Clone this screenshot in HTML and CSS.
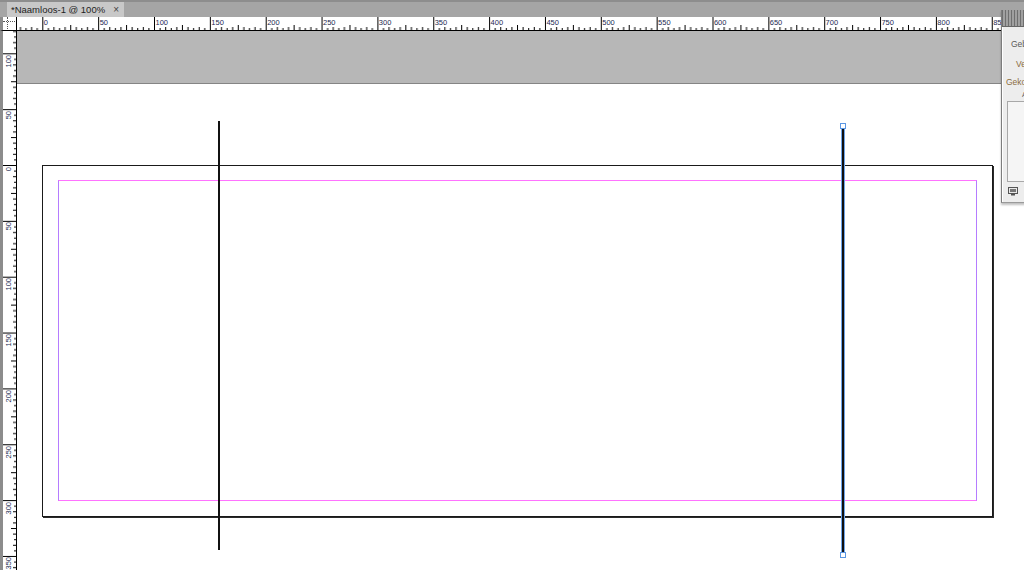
FILE: index.html
```html
<!DOCTYPE html>
<html lang="nl">
<head>
  <meta charset="UTF-8">
  <title>Naamloos-1 @ 100%</title>
  <link rel="stylesheet" href="styles.css">
</head>
<body>

  <!-- documenttabs -->
  <div class="tabbar">
    <div class="tab">
      <span class="tab-title">*Naamloos-1 @ 100%</span>
      <span class="tab-close">×</span>
    </div>
  </div>

  <!-- linialen + werkruimte -->
  <div class="workspace">
    <div class="ruler-corner"></div>

    <div class="ruler ruler-h">
      <svg class="ticks" width="100%" height="13">
        <defs>
          <pattern id="ticks-h" patternUnits="userSpaceOnUse" x="25.3" y="0" width="55.85" height="13">
            <rect x="0" y="0" width="1" height="13"/>
            <rect x="5.585" y="11" width="1" height="2"/>
            <rect x="11.17" y="10" width="1" height="3"/>
            <rect x="16.755" y="11" width="1" height="2"/>
            <rect x="22.34" y="10" width="1" height="3"/>
            <rect x="27.925" y="8" width="1" height="5"/>
            <rect x="33.51" y="10" width="1" height="3"/>
            <rect x="39.095" y="11" width="1" height="2"/>
            <rect x="44.68" y="10" width="1" height="3"/>
            <rect x="50.265" y="11" width="1" height="2"/>
          </pattern>
        </defs>
        <rect width="100%" height="13" fill="url(#ticks-h)" shape-rendering="crispEdges"/>
      </svg>
      <div class="labels-h">
        <span>0</span><span>50</span><span>100</span><span>150</span><span>200</span><span>250</span>
        <span>300</span><span>350</span><span>400</span><span>450</span><span>500</span><span>550</span>
        <span>600</span><span>650</span><span>700</span><span>750</span><span>800</span><span>850</span>
      </div>
    </div>

    <div class="ruler ruler-v">
      <svg class="ticks" width="13" height="100%">
        <defs>
          <pattern id="ticks-v" patternUnits="userSpaceOnUse" x="0" y="134" width="13" height="55.85">
            <rect x="0" y="0" width="13" height="1"/>
            <rect x="11" y="5.585" width="2" height="1"/>
            <rect x="10" y="11.17" width="3" height="1"/>
            <rect x="11" y="16.755" width="2" height="1"/>
            <rect x="10" y="22.34" width="3" height="1"/>
            <rect x="8" y="27.925" width="5" height="1"/>
            <rect x="10" y="33.51" width="3" height="1"/>
            <rect x="11" y="39.095" width="2" height="1"/>
            <rect x="10" y="44.68" width="3" height="1"/>
            <rect x="11" y="50.265" width="2" height="1"/>
          </pattern>
        </defs>
        <rect width="13" height="100%" fill="url(#ticks-v)" shape-rendering="crispEdges"/>
      </svg>
      <div class="labels-v">
        <div><span>100</span></div><div><span>50</span></div><div><span>0</span></div>
        <div><span>50</span></div><div><span>100</span></div><div><span>150</span></div>
        <div><span>200</span></div><div><span>250</span></div><div><span>300</span></div>
        <div><span>350</span></div>
      </div>
    </div>

    <div class="canvas">
      <div class="pasteboard"></div>

      <!-- pagina met marges -->
      <div class="page">
        <div class="margins"></div>
      </div>

      <!-- lijnen -->
      <div class="line line-a"></div>
      <div class="line line-b selected">
        <span class="handle handle-top"></span>
        <span class="handle handle-bottom"></span>
      </div>
    </div>
  </div>

  <!-- zwevend paneel -->
  <div class="panel">
    <div class="panel-grip"></div>
    <div class="panel-body">
      <div class="panel-label label-geb">Geb</div>
      <div class="panel-label label-ve">Ve</div>
      <div class="panel-label label-geko">Geko</div>
      <div class="panel-mark">A</div>
      <div class="panel-list"></div>
      <div class="panel-foot">
        <svg class="panel-icon" width="10" height="9" viewBox="0 0 10 9">
          <rect x="0.5" y="0.5" width="9" height="6" fill="#e8e8e8" stroke="#555"/>
          <rect x="2" y="2" width="6" height="3" fill="#777"/>
          <rect x="3" y="7" width="4" height="1.5" fill="#555"/>
        </svg>
      </div>
    </div>
  </div>

</body>
</html>
```

FILE: styles.css
```css
* {
  margin: 0;
  padding: 0;
  box-sizing: border-box;
}

html, body {
  width: 1024px;
  height: 570px;
  overflow: hidden;
}

body {
  font-family: 'Liberation Sans', Arial, sans-serif;
  background: #ffffff;
  position: relative;
}

/* tabs */
.tabbar {
  height: 17px;
  background: #a5a5a5;
  border-top: 2px solid #8d8d8d;
  padding-left: 7px;
  display: flex;
  align-items: flex-end;
}

.tab {
  width: 117px;
  height: 15px;
  background: #c8c8c8;
  display: flex;
  align-items: center;
  padding-left: 4px;
  font-size: 9.5px;
  color: #1e1e1e;
}

.tab-title {
  flex: none;
}

.tab-close {
  margin-left: 8px;
  font-size: 10px;
  color: #444;
}

/* linialen */
.workspace {
  display: grid;
  grid-template-columns: 17px 1fr;
  grid-template-rows: 14px 1fr;
  height: 553px;
}

.ruler-corner {
  background: #fff;
  border-left: 3px solid #8c8c8c;
  border-right: 1px solid #000;
  border-bottom: 1px solid #000;
  position: relative;
}

.ruler-corner::before {
  content: "";
  position: absolute;
  left: 4px;
  top: 0;
  height: 12px;
  border-left: 1px dotted #555;
}

.ruler-corner::after {
  content: "";
  position: absolute;
  left: 0;
  top: 4px;
  width: 12px;
  border-top: 1px dotted #555;
}

.ruler {
  background: #fff;
  position: relative;
  overflow: hidden;
  color: #1c2a52;
  font-size: 7.5px;
}

.ruler .ticks {
  position: absolute;
  top: 0;
  left: 0;
  fill: #000;
}

.ruler-h {
  border-bottom: 1px solid #000;
}

.labels-h {
  display: flex;
  padding-left: 26.8px;
  padding-top: 2px;
  line-height: 8px;
}

.labels-h span {
  flex: none;
  width: 55.85px;
}

.ruler-v {
  border-left: 3px solid #8c8c8c;
  border-right: 1px solid #000;
}

.labels-v {
  display: flex;
  flex-direction: column;
  padding-top: 23.9px;
}

.labels-v div {
  flex: none;
  height: 55.85px;
  padding-left: 2px;
}

.labels-v span {
  display: block;
  writing-mode: vertical-rl;
  transform: rotate(180deg);
  line-height: 8px;
  width: 8px;
}

/* canvas */
.canvas {
  position: relative;
  background: #fff;
  overflow: hidden;
}

.pasteboard {
  height: 53px;
  background: #b7b7b7;
  border-bottom: 1px solid #858585;
}

.page {
  position: absolute;
  left: 25px;
  top: 134px;
  width: 951px;
  height: 352px;
  border: 1px solid #1a1a1a;
  box-shadow: 1px 1px 0 #2a2a2a;
  padding: 14px 15px;
}

.margins {
  width: 919px;
  height: 321px;
  border: 1px solid;
  border-color: #ff73ff #b57cff #ff73ff #b57cff;
}

.line {
  position: absolute;
  width: 2px;
  background: #111;
}

.line-a {
  left: 201px;
  top: 90px;
  height: 429px;
}

.line-b {
  left: 824px;
  top: 96px;
  width: 4px;
  height: 425px;
  background-clip: content-box;
  border-left: 1px solid #6fa5ea;
  border-right: 1px solid #6fa5ea;
}

.handle {
  position: absolute;
  left: -2px;
  width: 6px;
  height: 6px;
  background: #fff;
  border: 1px solid #5b97e3;
}

.handle-top {
  top: -4px;
}

.handle-bottom {
  top: 425px;
}

/* paneel */
.panel {
  position: absolute;
  left: 1001px;
  top: 10px;
  width: 60px;
  height: 193px;
  background: #ededed;
  border-left: 1px solid #7d7d7d;
  border-bottom: 1px solid #9a9a9a;
  box-shadow: 0 2px 2px rgba(0, 0, 0, 0.25);
  display: flex;
  flex-direction: column;
}

.panel-grip {
  height: 17px;
  flex: none;
  background: repeating-linear-gradient(90deg, #6f6f6f 0 1px, #a0a0a0 1px 3px);
  border-bottom: 1px solid #666;
}

.panel-body {
  flex: 1;
  border-left: 1px solid #fff;
  font-size: 8.5px;
  white-space: nowrap;
  color: #5a5a5a;
  display: flex;
  flex-direction: column;
}

.panel-label {
  line-height: 11px;
}

.label-geb {
  margin-top: 12px;
  padding-left: 8px;
}

.label-ve {
  margin-top: 9px;
  padding-left: 13px;
  color: #8b6c3e;
}

.label-geko {
  margin-top: 7px;
  padding-left: 3px;
  color: #8b6c3e;
}

.panel-mark {
  padding-left: 19px;
  font-size: 7px;
  line-height: 8px;
  margin-top: 3px;
}

.panel-list {
  height: 81px;
  margin: 2px 0 0 4px;
  background: #f5f5f5;
  border: 1px solid #a8a8a8;
}

.panel-foot {
  padding: 5px 0 0 5px;
}

.panel-icon {
  display: block;
}
```
